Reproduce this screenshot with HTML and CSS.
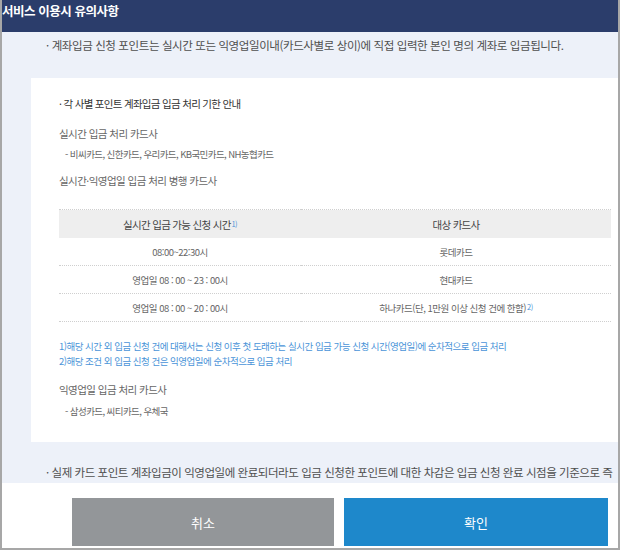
FILE: index.html
```html
<!DOCTYPE html>
<html lang="ko">
<head>
<meta charset="utf-8">
<title>서비스 이용시 유의사항</title>
<link rel="stylesheet" href="styles.css">
</head>
<body>
<div class="frame">
  <div class="header"><h1 class="title">서비스 이용시 유의사항</h1></div>
  <div class="scroll">
    <div class="inner">
      <p class="bullet">· 계좌입금 신청 포인트는 실시간 또는 익영업일이내(카드사별로 상이)에 직접 입력한 본인 명의 계좌로 입금됩니다.</p>
      <div class="box">
        <p class="box-title">· 각 사별 포인트 계좌입금 입금 처리 기한 안내</p>
        <p class="sub sub-b">실시간 입금 처리 카드사</p>
        <p class="list list-c">- 비씨카드, 신한카드, 우리카드, KB국민카드, NH농협카드</p>
        <p class="sub sub-d">실시간·익영업일 입금 처리 병행 카드사</p>
        <table class="tbl">
          <colgroup><col class="c1"><col class="c2"></colgroup>
          <thead>
            <tr><th>실시간 입금 가능 신청 시간<sup class="ref">1)</sup></th><th>대상 카드사</th></tr>
          </thead>
          <tbody>
            <tr><td>08:00~22:30시</td><td>롯데카드</td></tr>
            <tr><td>영업일 08 : 00 ~ 23 : 00시</td><td>현대카드</td></tr>
            <tr><td>영업일 08 : 00 ~ 20 : 00시</td><td>하나카드(단, 1만원 이상 신청 건에 한함)<sup class="ref">2)</sup></td></tr>
          </tbody>
        </table>
        <p class="note note-1">1)해당 시간 외 입금 신청 건에 대해서는 신청 이후 첫 도래하는 실시간 입금 가능 신청 시간(영업일)에 순차적으로 입금 처리</p>
        <p class="note">2)해당 조건 외 입금 신청 건은 익영업일에 순차적으로 입금 처리</p>
        <p class="sub sub-e">익영업일 입금 처리 카드사</p>
        <p class="list list-f">- 삼성카드, 씨티카드, 우체국</p>
      </div>
      <p class="bullet bullet-last">· 실제 카드 포인트 계좌입금이 익영업일에 완료되더라도 입금 신청한 포인트에 대한 차감은 입금 신청 완료 시점을 기준으로 즉</p>
    </div>
  </div>
  <div class="footer">
    <button class="btn btn-cancel" type="button">취소</button>
    <button class="btn btn-ok" type="button">확인</button>
  </div>
</div>
</body>
</html>
```
FILE: styles.css
```css
html, body {
  margin: 0;
  padding: 0;
  background: #ffffff;
}
body {
  font-family: "Noto Sans CJK KR", "Noto Sans", sans-serif;
}
p { margin: 0; }

.frame {
  width: 620px;
  height: 550px;
  box-sizing: border-box;
  border: 2px solid #a7a7a7;
  border-top: 0;
  overflow: hidden;
  display: flex;
  flex-direction: column;
  background: #ffffff;
}

.header {
  height: 32px;
  flex: none;
  background: #2b3d6b;
}
.title {
  margin: 0;
  padding-left: 0;
  font-size: 12.5px;
  font-weight: 700;
  letter-spacing: -0.45px;
  line-height: 22px;
  color: #ffffff;
  white-space: nowrap;
}

.scroll {
  height: 451px;
  flex: none;
  background: #edf1f9;
  overflow: hidden;
}
.inner {
  width: 650px;
  padding-top: 4px;
}

.bullet {
  padding-left: 44px;
  font-size: 11.5px;
  letter-spacing: -0.4px;
  line-height: 18px;
  color: #4f4f4f;
  white-space: nowrap;
}
.bullet-last {
  margin-top: 21px;
  letter-spacing: -0.45px;
}

.box {
  margin-top: 24px;
  margin-left: 29px;
  width: 608px;
  box-sizing: border-box;
  padding: 18px 28px 23px;
  background: #ffffff;
}
.box-title {
  font-size: 10.5px;
  letter-spacing: -0.7px;
  line-height: 16px;
  color: #333333;
}
.sub {
  font-size: 10.5px;
  letter-spacing: -0.55px;
  line-height: 16px;
  color: #666666;
}
.sub-b { margin-top: 14px; }
.sub-d { margin-top: 11px; }
.sub-e { margin-top: 13px; }
.list {
  padding-left: 6px;
  font-size: 9.5px;
  letter-spacing: -0.58px;
  line-height: 16px;
  color: #666666;
}
.list-c { margin-top: 4px; }
.list-f { margin-top: 5px; }

.tbl {
  margin-top: 20px;
  width: 552px;
  border-collapse: collapse;
  table-layout: fixed;
}
.c1 { width: 242px; }
.c2 { width: 310px; }
.tbl th {
  height: 28px;
  padding: 0;
  border-top: 1px dotted #cfcfcf;
  background: #eeeeee;
  font-size: 10.5px;
  font-weight: 400;
  letter-spacing: -0.7px;
  color: #444444;
  text-align: center;
}
.tbl td {
  height: 27px;
  padding: 0;
  border-bottom: 1px dotted #cfcfcf;
  font-size: 9.5px;
  letter-spacing: -0.5px;
  color: #666666;
  text-align: center;
}
.ref {
  font-size: 7.5px;
  color: #4a94d8;
  vertical-align: 2px;
  line-height: 0;
  margin-left: 1px;
}

.note {
  font-size: 9.5px;
  letter-spacing: -0.5px;
  line-height: 15px;
  color: #4a94d8;
}
.note-1 { margin-top: 17px; }

.footer {
  flex: 1;
  display: flex;
  gap: 10px;
  padding: 15px 0 0 70px;
  background: #ffffff;
}
.btn {
  height: 48px;
  border: 0;
  margin: 0;
  padding: 0;
  font-family: "Noto Sans CJK KR", "Noto Sans", sans-serif;
  font-size: 13px;
  color: #ffffff;
  cursor: pointer;
}
.btn-cancel {
  width: 262px;
  background: #939699;
}
.btn-ok {
  width: 264px;
  background: #1e88cb;
}
```
